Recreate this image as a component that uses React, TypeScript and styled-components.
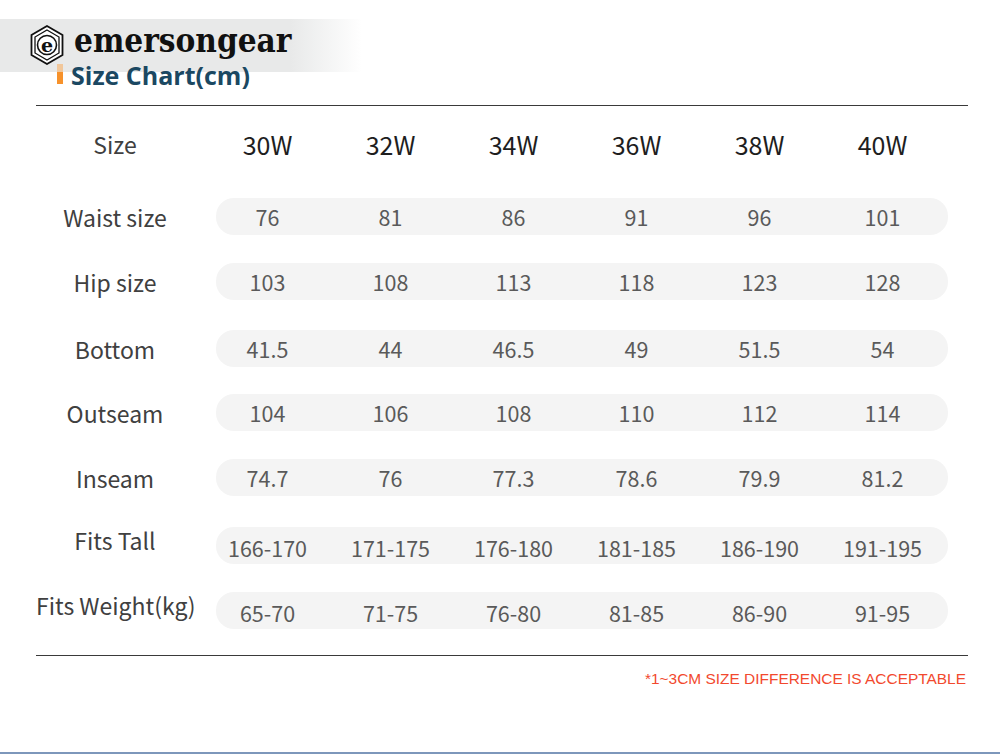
import * as React from 'react'
import styled, { createGlobalStyle } from 'styled-components'

const GlobalStyle = createGlobalStyle`
  html, body {
    margin: 0;
    padding: 0;
    background: #fff;
  }
  body {
    font-family: "Noto Sans CJK SC", "Noto Sans", sans-serif;
  }
`

const sizes = ['30W', '32W', '34W', '36W', '38W', '40W']

const rows = [
  { label: 'Waist size', values: ['76', '81', '86', '91', '96', '101'], gap: 36 },
  { label: 'Hip size', values: ['103', '108', '113', '118', '123', '128'], gap: 28 },
  { label: 'Bottom', values: ['41.5', '44', '46.5', '49', '51.5', '54'], gap: 30 },
  { label: 'Outseam', values: ['104', '106', '108', '110', '112', '114'], gap: 27 },
  { label: 'Inseam', values: ['74.7', '76', '77.3', '78.6', '79.9', '81.2'], gap: 28 },
  { label: 'Fits Tall', values: ['166-170', '171-175', '176-180', '181-185', '186-190', '191-195'], gap: 31, lifted: true },
  { label: 'Fits Weight(kg)', values: ['65-70', '71-75', '76-80', '81-85', '86-90', '91-95'], gap: 28, lifted: true },
]

const Page = styled.div`
  width: 1000px;
  height: 754px;
  box-sizing: border-box;
  border-bottom: 2px solid #7d97bb;
  overflow: hidden;
`

const Header = styled.header`
  height: 105px;
  box-sizing: border-box;
  padding: 26px 0 0 30px;
  background: linear-gradient(to right, #e8e9e9 0, #e8e9e9 290px, #ffffff 362px) no-repeat;
  background-size: 100% 53px;
  background-position: 0 19px;
`

const Brand = styled.div`
  display: flex;
  align-items: center;
  gap: 10px;
  height: 38px;
`

const Wordmark = styled.span`
  font-family: "DejaVu Serif Condensed", "DejaVu Serif", "Liberation Serif", serif;
  font-stretch: condensed;
  font-weight: 900;
  font-size: 33px;
  line-height: 30px;
  color: #111;
  margin-top: -9px;
`

const Title = styled.h1`
  display: flex;
  align-items: center;
  gap: 8px;
  margin: -3px 0 0 27px;
  font-family: "Open Sans", "Noto Sans", sans-serif;
  font-weight: 700;
  font-size: 25px;
  line-height: 28px;
  color: #1b4862;
`

const Accent = styled.span`
  width: 6px;
  height: 20px;
  margin-top: -2px;
  background: linear-gradient(to bottom, #f1c79b 0, #f1c79b 40%, #f7922b 40%, #f7922b 100%);
`

const Rule = styled.div`
  margin: 0 32px 0 36px;
  height: 1px;
  background: #3a3a3a;
`

const Table = styled.div`
  display: flex;
  flex-direction: column;
  padding-bottom: 26px;
`

const Row = styled.div<{ $gap: number }>`
  display: flex;
  align-items: center;
  margin-top: ${({ $gap }) => $gap}px;
  height: 37px;
`

const Label = styled.div<{ $lifted?: boolean }>`
  width: 194px;
  box-sizing: border-box;
  padding-left: 36px;
  padding-bottom: ${({ $lifted }) => ($lifted ? '12px' : '0')};
  text-align: center;
  font-size: 23px;
  line-height: 30px;
  color: #404040;
  white-space: nowrap;
`

const Pill = styled.div<{ $plain?: boolean }>`
  margin-left: 22px;
  width: 732px;
  height: 37px;
  border-radius: 18px;
  background: ${({ $plain }) => ($plain ? 'transparent' : '#f4f4f4')};
  display: flex;
  align-items: center;
`

const Cells = styled.div`
  display: grid;
  grid-template-columns: repeat(6, 123px);
  margin-left: -10px;
`

const Cell = styled.div<{ $head?: boolean; $low?: boolean }>`
  text-align: center;
  font-size: ${({ $head }) => ($head ? '25px' : '21.5px')};
  font-weight: 400;
  color: ${({ $head }) => ($head ? '#1e1e1e' : '#5a5a5a')};
  line-height: 30px;
  padding-top: ${({ $low }) => ($low ? '4px' : '0')};
  white-space: nowrap;
`

const Note = styled.div`
  margin: 14px 34px 0 0;
  text-align: right;
  font-family: "Liberation Sans", Arial, sans-serif;
  font-size: 15.45px;
  line-height: 18px;
  color: #f2492e;
`

const Logo = () => (
  <svg width="34" height="40" viewBox="0 0 34 40">
    <polygon points="17,1 32.5,10 32.5,30 17,39 1.5,30 1.5,10" fill="#fff" stroke="#111" strokeWidth="1.8" />
    <polygon points="17,5 29,12 29,28 17,35 5,28 5,12" fill="#fff" stroke="#111" strokeWidth="1.3" />
    <circle cx="17" cy="20" r="9.5" fill="#fff" stroke="#111" strokeWidth="1.6" />
    <text
      x="17"
      y="26.5"
      textAnchor="middle"
      fontFamily="DejaVu Serif, serif"
      fontWeight="900"
      fontSize="19"
      fill="#111"
    >
      e
    </text>
  </svg>
)

export default function App() {
  return (
    <Page>
      <GlobalStyle />
      <Header>
        <Brand>
          <Logo />
          <Wordmark>emersongear</Wordmark>
        </Brand>
        <Title>
          <Accent />
          Size Chart(cm)
        </Title>
      </Header>
      <Rule />
      <Table>
        <Row $gap={19}>
          <Label>Size</Label>
          <Pill $plain>
            <Cells>
              {sizes.map((s) => (
                <Cell key={s} $head>
                  {s}
                </Cell>
              ))}
            </Cells>
          </Pill>
        </Row>
        {rows.map((r) => (
          <Row key={r.label} $gap={r.gap}>
            <Label $lifted={r.lifted}>{r.label}</Label>
            <Pill>
              <Cells>
                {r.values.map((v, i) => (
                  <Cell key={i} $low={r.lifted}>
                    {v}
                  </Cell>
                ))}
              </Cells>
            </Pill>
          </Row>
        ))}
      </Table>
      <Rule />
      <Note>*1~3CM SIZE DIFFERENCE IS ACCEPTABLE</Note>
    </Page>
  )
}
